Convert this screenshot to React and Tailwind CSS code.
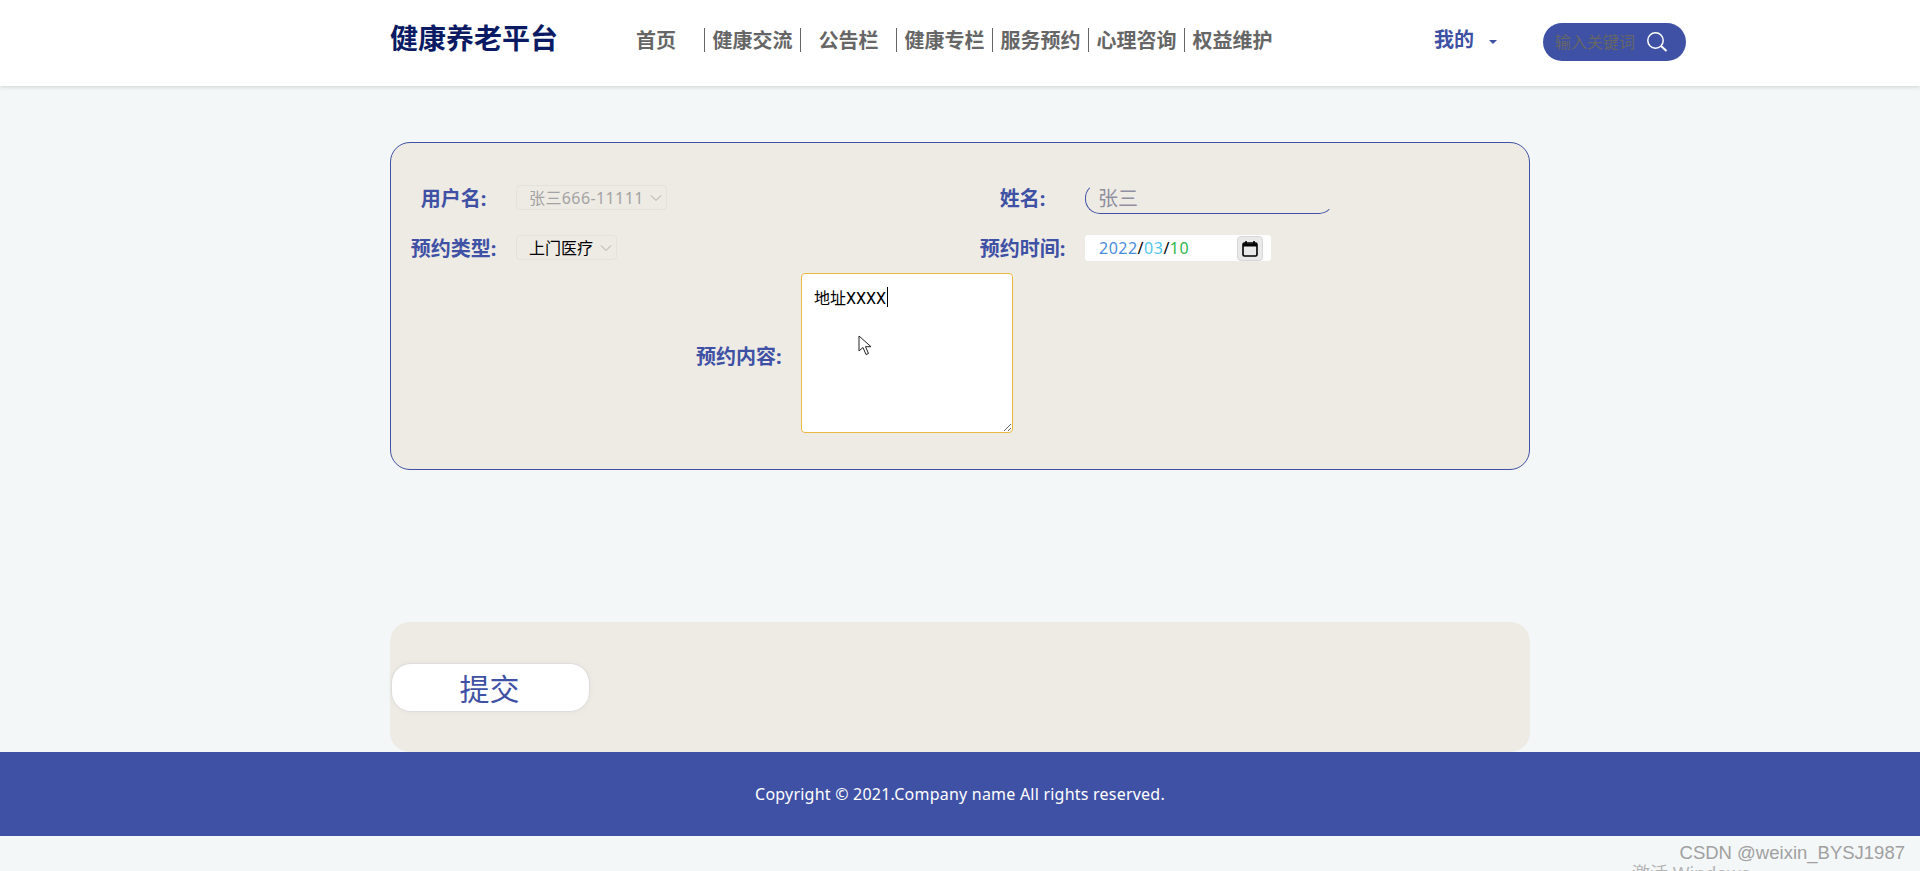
import React from "react";

const cjk = { fontFamily: '"Noto Sans", "Noto Sans CJK SC", sans-serif' };

const navItems = ["首页", "健康交流", "公告栏", "健康专栏", "服务预约", "心理咨询", "权益维护"];

const Chevron = ({ color = "#a8a8a8" }) => (
  <svg width="12" height="8" viewBox="0 0 12 8" fill="none" className="absolute right-[5px] top-[9px]">
    <path d="M1 1.5 6 6.5 11 1.5" stroke={color} strokeWidth="1" />
  </svg>
);

const Label = ({ children, className = "" }) => (
  <label className={`whitespace-nowrap text-[20px] leading-none font-bold text-[#3f51a5] ${className}`}>{children}</label>
);

export default function App() {
  return (
    <div className="relative h-[871px] overflow-hidden bg-[#f4f7f8]" style={cjk}>
      {/* 头部 */}
      <header className="relative z-10 h-[86px] bg-white shadow-[0_1px_4px_rgba(0,0,0,0.15)]">
        <div className="mx-auto flex h-full w-[1140px] items-center whitespace-nowrap">
          <div className="mb-[10px] w-[218px] shrink-0 text-[28px] font-bold leading-none text-[#0b1b63]">健康养老平台</div>
          <nav className="mb-[6px] flex shrink-0 items-center">
            {navItems.map((item, i) => (
              <a
                key={item}
                className={`flex h-[24px] w-[96px] items-center justify-center pt-[2px] text-[20px] font-bold text-[#666666] ${
                  i > 0 ? "border-l border-[#666666]" : ""
                }`}
              >
                {item}
              </a>
            ))}
          </nav>
          <div className="mb-[6px] ml-[154px] flex shrink-0 items-center">
            <span className="text-[20px] font-bold leading-none text-[#3f51a5]">我的</span>
            <svg width="8" height="4" viewBox="0 0 8 4" className="ml-[15px] mt-[3px]">
              <path d="M0 0h8L4 4z" fill="#3f51a5" />
            </svg>
          </div>
          <div className="mb-[2px] ml-[46px] flex h-[38px] w-[143px] shrink-0 items-center rounded-[19px] bg-[#3f51a5] pl-[12px]">
            <span className="text-[16px] leading-none text-[#666666]">输入关键词</span>
            <svg width="22" height="22" viewBox="0 0 22 22" fill="none" className="ml-[11px]">
              <circle cx="9.5" cy="9.5" r="7.7" stroke="white" strokeWidth="1.5" />
              <path d="M15 15l5.5 5" stroke="white" strokeWidth="2" />
            </svg>
          </div>
        </div>
      </header>

      <main className="mx-auto w-[1140px] pt-[56px]">
        {/* 预约表单 */}
        <div className="h-[328px] rounded-[20px] border border-[#3f51a5] bg-[#eeebe5] pt-[40px]">
          <div className="grid h-[52px] grid-cols-2">
            <div className="flex items-start">
              <div className="flex h-[31px] w-[125px] items-center justify-center">
                <Label>用户名:</Label>
              </div>
              <div className="relative mt-[2px] h-[25px] w-[151px]">
                <select
                  disabled
                  className="h-full w-full appearance-none rounded-[4px] border border-[#e4e2de] bg-transparent pl-[12px] text-[16px] leading-none tracking-[0.4px] text-[#a3a3a3]"
                >
                  <option>张三666-11111</option>
                </select>
                <Chevron />
              </div>
            </div>
            <div className="flex items-start">
              <div className="flex h-[31px] w-[125px] items-center justify-center">
                <Label>姓名:</Label>
              </div>
              <input
                placeholder="张三"
                className="h-[31px] w-[249px] rounded-[15px] border border-transparent border-b-[#3f51a5] border-l-[#3f51a5] bg-transparent px-[12px] text-[20px] outline-none placeholder:text-[#8f8f9f]"
              />
            </div>
          </div>
          <div className="grid h-[33px] grid-cols-2">
            <div className="flex items-start">
              <div className="flex h-[28px] w-[125px] items-center justify-center">
                <Label>预约类型:</Label>
              </div>
              <div className="relative h-[25px] w-[101px]">
                <select className="h-full w-full appearance-none rounded-[4px] border border-[#e4e2de] bg-transparent pl-[12px] text-[16px] leading-none text-black outline-none">
                  <option>上门医疗</option>
                </select>
                <Chevron />
              </div>
            </div>
            <div className="flex items-start">
              <div className="flex h-[28px] w-[125px] items-center justify-center">
                <Label>预约时间:</Label>
              </div>
              <div className="flex h-[26px] w-[186px] items-center rounded-[3px] bg-white pl-[14px] pr-[8px] text-[16px] leading-none tracking-[0.5px] text-black">
                <span className="text-[#4a8ddc]">2022</span>
                <span>/</span>
                <span className="text-[#52c6ea]">03</span>
                <span>/</span>
                <span className="text-[#2db84d]">10</span>
                <span className="ml-auto flex h-[25px] w-[26px] items-center justify-center rounded-[4px] border border-[#d8d8d8] bg-[#e9e9e9]">
                  <svg width="16" height="17" viewBox="0 0 16 17" fill="none">
                    <rect x="1" y="3" width="14" height="13" rx="1.5" stroke="black" strokeWidth="1.6" />
                    <path d="M1 3.5h14V6.5H1z" fill="black" />
                    <path d="M4 1v3M12 1v3" stroke="black" strokeWidth="1.6" />
                  </svg>
                </span>
              </div>
            </div>
          </div>
          <div className="flex items-center pl-[305px] pt-[5px]">
            <Label className="mt-[8px] w-[105px]">预约内容:</Label>
            <div className="relative">
              <textarea
                defaultValue="地址XXXX"
                className="block h-[160px] w-[212px] rounded-[4px] border border-[#eab93f] bg-white px-[12px] pb-[12px] pt-[13px] text-[16px] leading-[24px] text-black outline-none"
                style={{ fontFamily: 'Roboto, "Noto Sans CJK SC", sans-serif' }}
              />
              {/* 光标和鼠标 */}
              <span className="absolute left-[86px] top-[14px] h-[20px] w-[1px] bg-black" />
              <svg width="14" height="21" viewBox="0 0 14 21" className="absolute left-[57px] top-[62px]">
                <path d="M1 1v15l4-3.500 3 7 2.500-1-3-6.800h5.500z" fill="white" stroke="#222" strokeWidth="1" />
              </svg>
            </div>
          </div>
        </div>

        {/* 提交 */}
        <div className="mt-[152px] flex h-[130px] items-center rounded-[20px] bg-[#eeebe5] pl-[1px]">
          <button className="h-[49px] w-[199px] rounded-[20px] border border-[#dddddd] bg-white pr-[2px] pt-[3px] text-[30px] leading-none text-[#3f51a5] shadow-[0_0_6px_rgba(0,0,0,0.04)]">
            提交
          </button>
        </div>
      </main>

      <footer className="flex h-[84px] items-center justify-center bg-[#3f51a5] text-[16px] tracking-[0.22px] text-white">
        Copyright © 2021.Company name All rights reserved.
      </footer>

      {/* 水印 */}
      <div className="absolute right-[15px] top-[842px] text-[18.500px] leading-[22px] text-[#a0a0a0]" style={{ fontFamily: '"Liberation Sans", sans-serif' }}>
        CSDN @weixin_BYSJ1987
      </div>
      <div className="absolute left-[1632px] top-[862px] text-[18px] leading-[22px] text-[#b5b5b5]">激活 Windows</div>
    </div>
  );
}
